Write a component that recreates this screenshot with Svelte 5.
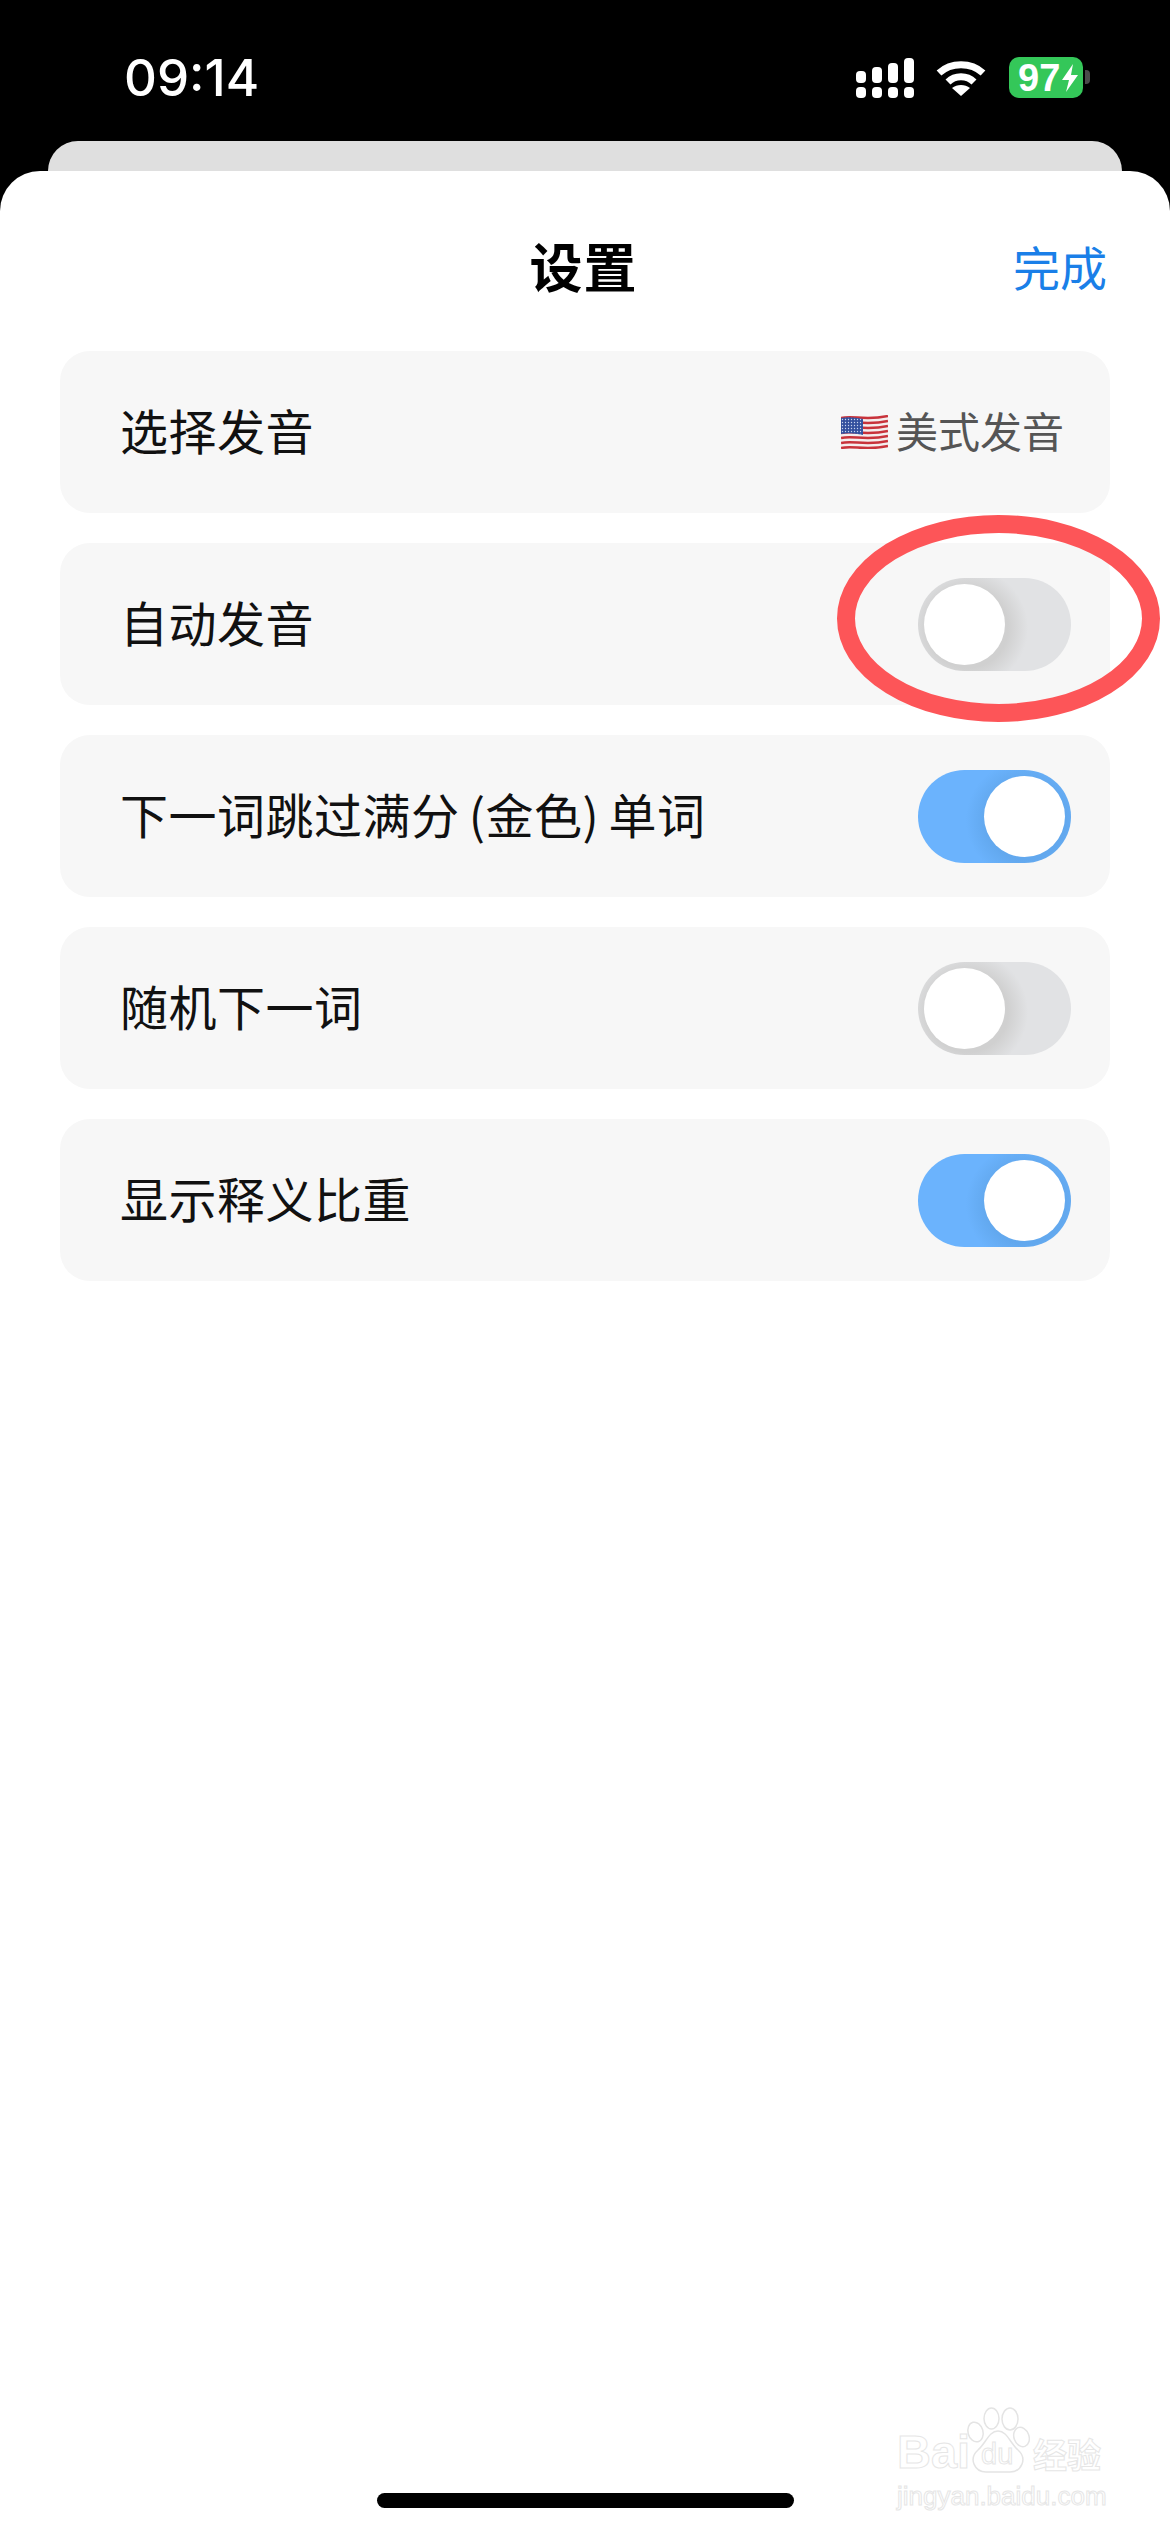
<script>
  const rows = [
    { label: "选择发音", value: "美式发音" },
    { label: "自动发音", on: false },
    { label: "下一词跳过满分 (金色) 单词", on: true },
    { label: "随机下一词", on: false },
    { label: "显示释义比重", on: true },
  ];
  const signalBars = [12, 16, 20, 25];
  const flagStripes = [0, 1, 2, 3, 4, 5, 6];
</script>

<div class="phone">
  <header class="status">
    <span class="time">09:14</span>
    <div class="status-icons">
      <div class="signal">
        {#each signalBars as h}
          <div class="signal-col">
            <i style="height: {h}px"></i>
            <i class="dot"></i>
          </div>
        {/each}
      </div>
      <svg class="wifi" viewBox="0 0 50 37" width="50" height="37">
        <path d="M3 14C15 3 35 3 47 14" fill="none" stroke="#fff" stroke-width="7" />
        <path d="M12 23C19 16 31 16 38 23" fill="none" stroke="#fff" stroke-width="7" />
        <path d="M25 37L16 29C21 25 29 25 34 29Z" fill="#fff" />
      </svg>
      <div class="battery">
        <span>97</span>
        <svg viewBox="0 0 17 28" width="17" height="28">
          <path d="M11 0L0 16H7L4 28L16 11H9Z" fill="#fff" />
        </svg>
      </div>
      <div class="nub"></div>
    </div>
  </header>

  <div class="back-card"></div>

  <main class="sheet">
    <div class="nav">
      <h1>设置</h1>
      <span class="done">完成</span>
    </div>

    <div class="list">
      {#each rows as row}
        <div class="row">
          <span class="label">{row.label}</span>
          {#if row.value}
            <div class="value">
              <svg class="flag" viewBox="0 0 47 34" width="47" height="34">
                <defs>
                  <pattern id="stars" width="3" height="3" patternUnits="userSpaceOnUse">
                    <circle cx="1.5" cy="1.5" r="0.7" fill="#c9d4ee" />
                  </pattern>
                </defs>
                <path d="M0 3C12 0 24 6 47 1V31C24 36 12 30 0 33Z" fill="#f4eeee" />
                {#each flagStripes as s}
                  <path
                    d="M0 {3 + s * 5}C12 {s * 5} 24 {6 + s * 5} 47 {1 + s * 5}"
                    fill="none"
                    stroke="#c8333b"
                    stroke-width="2.6"
                  />
                {/each}
                <path d="M0 3C8 1.5 14 2.5 22 4V20C14 18.5 8 17.5 0 19Z" fill="#33509e" />
                <path d="M0 3C8 1.5 14 2.5 22 4V20C14 18.5 8 17.5 0 19Z" fill="url(#stars)" />
              </svg>
              <span>{row.value}</span>
            </div>
          {:else}
            <div class="toggle" class:on={row.on}><div class="knob"></div></div>
          {/if}
        </div>
      {/each}
    </div>

    <!-- hand drawn annotation over the second row -->
    <svg class="circle" viewBox="0 0 323 207" width="323" height="207">
      <ellipse cx="161.5" cy="103.5" rx="152.5" ry="94.5" fill="none" stroke="#fd5558" stroke-width="18" />
    </svg>

    <div class="watermark">
      <div class="brand">
        <span class="bai">Bai</span>
        <div class="paw">
          <svg viewBox="0 0 65 66" width="65" height="66">
            <g fill="#fff" stroke="#e4e4e4" stroke-width="1.5">
              <ellipse cx="10.5" cy="25" rx="7.5" ry="10" transform="rotate(-15 10.5 25)" />
              <ellipse cx="26.5" cy="11.5" rx="7.5" ry="10.5" />
              <ellipse cx="45" cy="12" rx="8" ry="11" />
              <ellipse cx="56.5" cy="30" rx="7.5" ry="10" transform="rotate(-20 56.5 30)" />
              <path d="M33 24C42 24 45 36 53 43C63 52 56 65 45 65H21C10 65 3 52 13 43C21 36 24 24 33 24Z" />
            </g>
          </svg>
          <span class="du">du</span>
        </div>
        <span class="jy">经验</span>
      </div>
      <div class="url">jingyan.baidu.com</div>
    </div>

    <div class="home-bar"></div>
  </main>
</div>

<style>
  :global(body) {
    background: #000;
  }

  .phone {
    width: 1170px;
    height: 2532px;
    overflow: hidden;
    display: flex;
    flex-direction: column;
    font-family: "Noto Sans CJK SC", sans-serif;
  }

  .status {
    height: 141px;
    box-sizing: border-box;
    padding: 50px 80px 0 124px;
    display: flex;
    justify-content: space-between;
    align-items: flex-start;
    color: #fff;
  }

  .time {
    font-family: Inter, "Liberation Sans", sans-serif;
    font-size: 51px;
    font-weight: 500;
    line-height: 56px;
  }

  .status-icons {
    display: flex;
    align-items: flex-start;
    padding-top: 7px;
  }

  .signal {
    display: flex;
    gap: 6px;
    height: 41px;
    margin-right: 22px;
  }

  .signal-col {
    display: flex;
    flex-direction: column;
    justify-content: flex-end;
    gap: 4px;
  }

  .signal-col i {
    display: block;
    width: 10px;
    background: #fff;
    border-radius: 4px;
  }

  .signal-col i.dot {
    height: 11px;
  }

  .wifi {
    margin: 2px 23px 0 0;
  }

  .battery {
    width: 74px;
    height: 41px;
    box-sizing: border-box;
    padding-left: 9px;
    background: #34c759;
    border-radius: 10px;
    display: flex;
    align-items: center;
    gap: 2px;
    color: #fff;
    font-family: "Liberation Sans", sans-serif;
    font-size: 38px;
    font-weight: 700;
    line-height: 1;
  }

  .nub {
    width: 5px;
    height: 14px;
    margin: 13px 0 0 2px;
    background: #4a4a4a;
    border-radius: 0 4px 4px 0;
  }

  .back-card {
    height: 30px;
    margin: 0 48px;
    background: #dfdfdf;
    border-radius: 30px 30px 0 0;
  }

  .sheet {
    position: relative;
    flex: 1;
    background: #fff;
    border-radius: 40px 40px 0 0;
    padding: 0 60px;
    display: flex;
    flex-direction: column;
  }

  .nav {
    height: 180px;
    box-sizing: border-box;
    padding: 8px 3px 0 0;
    display: grid;
    grid-template-columns: 1fr auto 1fr;
    align-items: center;
    color: #000;
  }

  h1 {
    grid-column: 2;
    margin: 0;
    font-size: 53px;
    font-weight: 700;
    line-height: 1;
    letter-spacing: 1px;
  }

  .done {
    grid-column: 3;
    justify-self: end;
    font-size: 47px;
    line-height: 1;
    color: #1a7fe8;
  }

  .list {
    display: flex;
    flex-direction: column;
    gap: 30px;
  }

  .row {
    height: 162px;
    box-sizing: border-box;
    padding: 0 39px 0 60px;
    background: #f7f7f7;
    border-radius: 30px;
    display: flex;
    align-items: center;
    justify-content: space-between;
    font-size: 48px;
    color: #111;
  }

  .label {
    padding-bottom: 7px;
    letter-spacing: 0.5px;
    word-spacing: -2px;
  }

  .value {
    display: flex;
    align-items: center;
    gap: 8px;
    margin-right: 7px;
    font-size: 42px;
    color: #555;
  }

  .value span {
    padding-bottom: 5px;
  }

  .toggle {
    width: 153px;
    height: 93px;
    box-sizing: border-box;
    padding: 6px;
    background-color: #e1e2e4;
    background-image: radial-gradient(circle at 50px 50px, #d0d0d0 40px, rgba(208, 208, 208, 0) 60px);
    border-radius: 47px;
    display: flex;
  }

  .toggle.on {
    background-color: #6bb3fd;
    background-image: radial-gradient(circle at 108px 50px, #62a8ee 40px, rgba(98, 168, 238, 0) 60px);
    justify-content: flex-end;
  }

  .knob {
    width: 81px;
    height: 81px;
    background: #fff;
    border-radius: 50%;
  }

  .circle {
    position: absolute;
    left: 837px;
    top: 344px;
  }

  .watermark {
    position: absolute;
    left: 897px;
    top: 2236px;
    color: transparent;
    -webkit-text-stroke: 1px #e6e6e6;
    font-family: "Liberation Sans", sans-serif;
  }

  .brand {
    display: flex;
    align-items: flex-end;
    height: 66px;
  }

  .bai {
    font-size: 47px;
    font-weight: 700;
    line-height: 42px;
    width: 68px;
  }

  .paw {
    position: relative;
    width: 65px;
    height: 66px;
  }

  .paw svg {
    display: block;
  }

  .du {
    position: absolute;
    left: 16px;
    bottom: 4px;
    font-size: 29px;
    line-height: 1;
  }

  .jy {
    margin-left: 3px;
    font-family: "Noto Sans CJK SC", sans-serif;
    font-size: 34px;
    font-weight: 700;
    line-height: 38px;
  }

  .url {
    margin-top: 8px;
    font-size: 26px;
    line-height: 30px;
    white-space: nowrap;
  }

  .home-bar {
    position: absolute;
    left: 377px;
    top: 2322px;
    width: 417px;
    height: 15px;
    background: #000;
    border-radius: 8px;
  }
</style>
